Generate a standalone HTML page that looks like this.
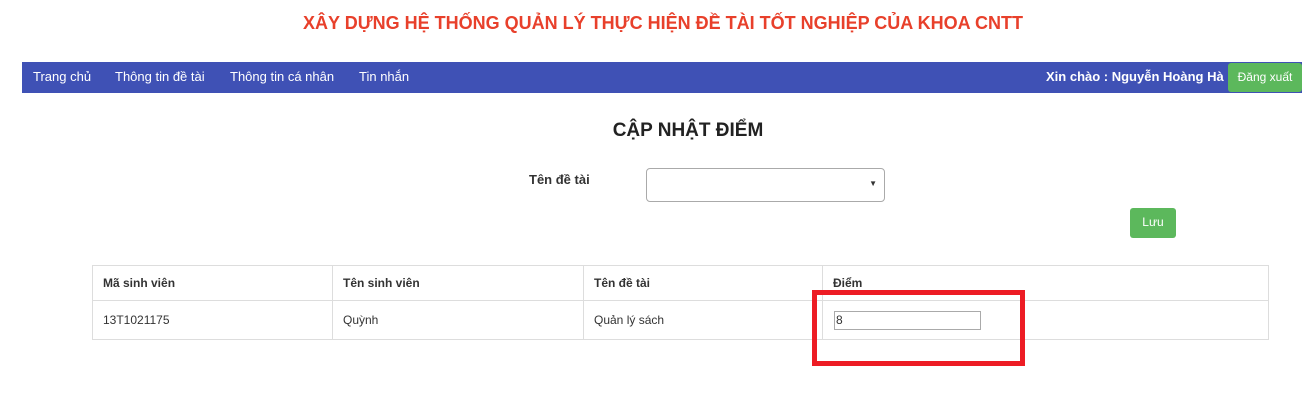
<!DOCTYPE html>
<html><head><meta charset="utf-8"><style>
*{box-sizing:border-box;margin:0;padding:0}
body{width:1314px;height:417px;background:#fff;font-family:"Liberation Sans",Arial,sans-serif;position:relative;overflow:hidden;color:#333}
.a{position:absolute;white-space:nowrap}
h1{position:absolute;left:0;width:1326px;top:13px;text-align:center;color:#e8402b;font-size:18px;font-weight:bold}
.nav{position:absolute;left:22px;top:62px;width:1280px;height:31px;background:#3f51b5;color:#fff;font-size:13px}
.nav span{position:absolute;top:7px}
.btn{background:#5cb85c;color:#fff;border-radius:3px;font-size:12px;text-align:center}
td{border:1px solid #ddd;font-size:12px;padding-left:10px;vertical-align:middle}
table{border-collapse:collapse;position:absolute;left:92px;top:265px;width:1177px}
</style></head><body>
<h1>XÂY DỰNG HỆ THỐNG QUẢN LÝ THỰC HIỆN ĐỀ TÀI TỐT NGHIỆP CỦA KHOA CNTT</h1>
<div class="nav">
<span style="left:11px">Trang chủ</span>
<span style="left:93px">Thông tin đề tài</span>
<span style="left:208px">Thông tin cá nhân</span>
<span style="left:337px">Tin nhắn</span>
<span style="left:1024px;font-weight:bold">Xin chào : Nguyễn Hoàng Hà</span>
<div class="btn a" style="left:1206px;top:1px;width:74px;height:29px;line-height:29px">Đăng xuất</div>
</div>
<div class="a" style="left:0;width:1376px;text-align:center;top:120px;font-size:19px;font-weight:bold;color:#222">CẬP NHẬT ĐIỂM</div>
<div class="a" style="left:529px;top:172px;font-size:13px;font-weight:bold">Tên đề tài</div>
<div class="a" style="left:646px;top:168px;width:239px;height:34px;border:1px solid #aaa;border-radius:4px"><span class="a" style="right:7px;top:10px;font-size:8px">▼</span></div>
<div class="btn a" style="left:1130px;top:208px;width:46px;height:30px;line-height:28px">Lưu</div>
<table>
<tr style="height:35px;font-weight:bold"><td style="width:240px;font-weight:bold">Mã sinh viên</td><td style="width:251px;font-weight:bold">Tên sinh viên</td><td style="width:239px;font-weight:bold">Tên đề tài</td><td style="font-weight:bold">Điểm</td></tr>
<tr style="height:39px"><td>13T1021175</td><td>Quỳnh</td><td>Quản lý sách</td><td><div style="width:147px;height:19px;border:1px solid #aaa;font-size:12px;line-height:17px;padding-left:1px;margin-left:1px">8</div></td></tr>
</table>
<div class="a" style="left:812px;top:290px;width:213px;height:76px;border:5px solid #ed1c24"></div>
</body></html>
